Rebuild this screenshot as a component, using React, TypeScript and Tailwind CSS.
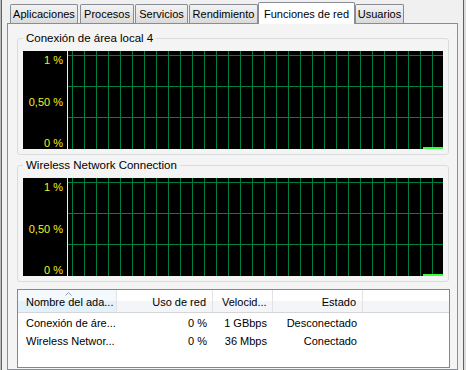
import React from 'react';

const tabs = [
  { label: 'Aplicaciones', cls: 'w-[68px]' },
  { label: 'Procesos', cls: 'w-[54px] ml-[2px]' },
  { label: 'Servicios', cls: 'w-[53px] ml-[1px]' },
  { label: 'Rendimiento', cls: 'w-[69px] ml-[1px]' },
  { label: 'Funciones de red', cls: 'w-[97px]', active: true },
  { label: 'Usuarios', cls: 'w-[49px]' },
];

const GridChart: React.FC = () => {
  const cols = Array.from({ length: 31 }, (_, i) => 4.5 + i * 12);
  const rows = [4.5, 35.5, 66.5];
  return (
    <svg width="375" height="98" className="block">
      {cols.map((x) => (
        <line key={x} x1={x} y1={0} x2={x} y2={98} stroke="#008040" strokeWidth="1" />
      ))}
      {rows.map((y) => (
        <line key={y} x1={0} y1={y} x2={375} y2={y} stroke="#008040" strokeWidth="1" />
      ))}
      <rect x="355" y="96" width="20" height="2" fill="#3cff3c" />
    </svg>
  );
};

const Graph: React.FC<{ title: string; className?: string }> = ({ title, className }) => (
  <fieldset className={`w-[432px] border border-[#d8dde0] rounded-[3px] ${className ?? ''}`}>
    <legend className="ml-[5px] px-[3px] leading-[16px] text-[11.5px] text-black">{title}</legend>
    <div className="pl-[5px] pr-[5px] pt-[5px] pb-[5px]">
      <div className="flex w-[420px] h-[98px] bg-black">
        <div className="w-[44px] flex flex-col justify-between items-end pr-[4px] pt-[3px] text-[11px] leading-[12px] text-[#f0f020]">
          <span>1 %</span>
          <span>0,50 %</span>
          <span>0 %</span>
        </div>
        <div className="w-px bg-[#ffff80]" />
        <GridChart />
      </div>
    </div>
  </fieldset>
);

const adapters = [
  { name: 'Conexión de áre...', use: '0 %', speed: '1 GBbps', state: 'Desconectado' },
  { name: 'Wireless Networ...', use: '0 %', speed: '36 Mbps', state: 'Conectado' },
];

const App: React.FC = () => {
  return (
    <div className="flex w-[466px] h-[370px] overflow-hidden bg-[#f0f0f0] font-['Liberation_Sans',Arial,sans-serif] text-[11px] text-black">
      <div className="w-px bg-[#b8bcb8]" />
      <div className="w-px bg-[#3d7a50]" />

      <div className="flex flex-col w-[456px]">
        {/* Tabs */}
        <div className="flex items-end h-[23px] pl-[8px]">
          {tabs.map((t) =>
            t.active ? (
              <div
                key={t.label}
                className={`relative z-10 -mb-px h-[22px] ${t.cls} flex justify-center pt-[3px] border border-b-0 border-[#898c95] rounded-t-[2px] bg-white`}
              >
                {t.label}
              </div>
            ) : (
              <div
                key={t.label}
                className={`h-[19px] ${t.cls} flex items-center justify-center pt-px border border-b-0 border-[#898c95] rounded-t-[2px] bg-linear-to-b from-[#f3f3f3] to-[#dadada]`}
              >
                {t.label}
              </div>
            )
          )}
        </div>

        {/* Tab page */}
        <div className="ml-[5px] w-[451px] h-[347px] border border-[#898c95] bg-[#f4f4f4]">
          <div className="ml-[9px] mt-[6px] flex flex-col">
            <Graph title="Conexión de área local 4" />
            <Graph title="Wireless Network Connection" className="mt-[2px]" />

            {/* Adapter list */}
            <div className="mt-[7px] w-[433px] h-[79px] border border-[#828790] bg-white">
              <div className="flex h-[23px] border-b border-[#d5d5d5] bg-[linear-gradient(#ffffff_50%,#f4f5f8_50%)]">
                <div className="relative w-[99px] flex items-center pl-[8px] pt-[3px] border-r border-[#e2e3e6] bg-[linear-gradient(#f3f9fd_50%,#e3f1fa_50%)]">
                  <svg width="7" height="4" className="absolute left-[47px] top-[2px]">
                    <path d="M0.5 3.5 L3.5 0.5 L6.5 3.5" fill="none" stroke="#8c9cb0" strokeWidth="1" />
                  </svg>
                  Nombre del ada...
                </div>
                <div className="w-[96px] flex items-center justify-end pr-[6px] pt-[3px] border-r border-[#e2e3e6]">
                  Uso de red
                </div>
                <div className="w-[60px] flex items-center pl-[9px] pt-[3px] border-r border-[#e2e3e6]">
                  Velocid...
                </div>
                <div className="w-[90px] flex items-center justify-end pr-[6px] pt-[3px] border-r border-[#e2e3e6]">
                  Estado
                </div>
                <div className="flex-1" />
              </div>
              <div className="pt-px">
                {adapters.map((a) => (
                  <div key={a.name} className="flex h-[18px] items-center">
                    <div className="w-[99px] pl-[8px]">{a.name}</div>
                    <div className="w-[96px] text-right pr-[6px]">{a.use}</div>
                    <div className="w-[60px] text-right pr-[6px]">{a.speed}</div>
                    <div className="w-[90px] text-right pr-[6px]">{a.state}</div>
                  </div>
                ))}
              </div>
            </div>
          </div>
        </div>
      </div>

      <div className="w-[5px]" />
      <div className="w-px bg-[#6b5f4c]" />
      <div className="w-[2px] bg-[#dcdcdc]" />
    </div>
  );
};

export default App;
